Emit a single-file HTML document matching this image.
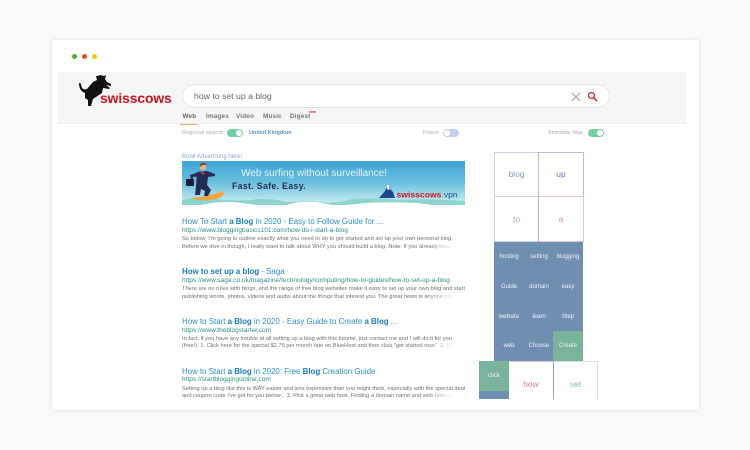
<!DOCTYPE html>
<html>
<head>
<meta charset="utf-8">
<style>
html,body{margin:0;padding:0;width:750px;height:450px;overflow:hidden;background:#f9f9f9;font-family:"Liberation Sans",sans-serif}
#w{position:absolute;left:0;top:0;width:750px;height:450px;filter:blur(.25px)}
.a{position:absolute;white-space:nowrap}
#card{position:absolute;left:52px;top:40px;width:647px;height:370px;background:#fff;border-radius:3px;box-shadow:0 0 4px rgba(0,0,0,.12)}
.dot{position:absolute;top:53.5px;width:5.4px;height:5.4px;border-radius:50%}
.tab{position:absolute;top:112.5px;font-size:6.3px;font-weight:bold;color:#777;letter-spacing:.2px;white-space:nowrap}
.lbl{position:absolute;font-size:5.3px;color:#aaa;letter-spacing:.2px;white-space:nowrap}
.tg{position:absolute;top:129px;width:16px;height:8px;border-radius:4px}
.tg i{position:absolute;top:1px;width:6px;height:6px;border-radius:50%;background:#fff}
.t{position:absolute;left:182px;font-size:7.9px;color:#2d8fc4;white-space:nowrap;line-height:10px}
.t b{color:#1a7cb5}
.u{position:absolute;left:182px;font-size:6.55px;color:#2b8f83;white-space:nowrap;line-height:8px}
.s{position:absolute;left:182px;width:283px;font-size:5.7px;color:#707070;white-space:nowrap;line-height:7px;overflow:hidden}
.fade{position:absolute;left:428px;width:38px;height:8px;background:linear-gradient(90deg,rgba(255,255,255,0),#fff 70%)}
.c{position:absolute;width:30px;height:30px;line-height:30px;text-align:center;font-size:6px;color:#eef2f7;background:#6e8fb2}
.b{position:absolute;box-sizing:border-box;text-align:center;background:#fff;font-size:8.5px}
</style>
</head>
<body>
<div id="w">
<div id="card"></div>
<div class="dot" style="left:72px;background:#4cae3f"></div>
<div class="dot" style="left:82px;background:#dd4f35"></div>
<div class="dot" style="left:92px;background:#eec116"></div>

<div class="a" style="left:58px;top:72px;width:628px;height:52px;background:#f5f5f5;border-bottom:1px solid #ececec;box-sizing:border-box"></div>

<svg class="a" style="left:78px;top:74px" width="36" height="34" viewBox="0 0 36 34">
<path fill="#111" d="M1 9 L2.5 9 L4 14 Q6 16 9 15 L15 8 L19 6 L18 2 L20 2 L22 1 L26 2 L28 1 L27 5 L29 8 L33 10 L33 12 L28 11 L32 14 L31 15 L25 14 L24 19 L18 23 L15 25 L13 32 L10 32 L10 26 L7 24 L7 19 Q1 17 1 9 Z"/>
</svg>
<div class="a" style="left:100px;top:89.5px;font-size:13.9px;font-weight:bold;color:#c8141f;line-height:16px;letter-spacing:-.1px">swisscows</div>

<div class="a" style="left:182px;top:84px;width:428px;height:24px;box-sizing:border-box;background:#fff;border:1px solid #e2e2e2;border-radius:12px"></div>
<div class="a" style="left:194px;top:90px;font-size:8.7px;color:#666;line-height:12px">how to set up a blog</div>
<svg class="a" style="left:571px;top:92px" width="10" height="10" viewBox="0 0 10 10"><path d="M1 1 L9 9 M9 1 L1 9" stroke="#a0a0a0" stroke-width="1.1" fill="none"/></svg>
<svg class="a" style="left:587px;top:91px" width="11" height="11" viewBox="0 0 11 11"><circle cx="4.5" cy="4.5" r="3" stroke="#d0202a" stroke-width="1.3" fill="none"/><path d="M6.8 6.8 L10 10" stroke="#d0202a" stroke-width="1.5"/></svg>

<div class="tab" style="left:182.5px;color:#666">Web</div>
<div class="tab" style="left:206px">Images</div>
<div class="tab" style="left:236px">Video</div>
<div class="tab" style="left:263px">Music</div>
<div class="tab" style="left:290px">Digest</div>
<div class="a" style="left:309px;top:109.5px;font-size:3.5px;color:#d0202a;font-weight:bold">new</div>
<div class="a" style="left:180px;top:124px;width:17px;height:1px;background:#f0a868"></div>

<div class="lbl" style="left:182px;top:130px">Regional search</div>
<div class="tg" style="left:227px;background:#73d0a4"><i style="right:1px"></i></div>
<div class="lbl" style="left:249px;top:130px;color:#5b93c7;font-size:5.5px;font-weight:bold;letter-spacing:0">United Kingdom</div>
<div class="lbl" style="left:423px;top:130px">Filters</div>
<div class="tg" style="left:443px;background:#c2d0ef"><i style="left:1px"></i></div>
<div class="lbl" style="left:548px;top:130px;letter-spacing:.1px">Semantic Map</div>
<div class="tg" style="left:588px;background:#73d0a4"><i style="right:1px"></i></div>

<div class="a" style="left:182px;top:153px;font-size:6px;color:#8aa9cc;line-height:8px">Book Advertising here!</div>

<svg class="a" style="left:182px;top:160.5px" width="283" height="44" viewBox="0 0 283 44">
<defs><linearGradient id="g" x1="0" y1="0" x2="0" y2="1"><stop offset="0" stop-color="#3ea3d4"/><stop offset=".5" stop-color="#6cc0e0"/><stop offset="1" stop-color="#d3f0f6"/></linearGradient></defs>
<rect width="283" height="44" fill="url(#g)"/>
<path d="M0 44 L0 39 Q15 35 35 38 Q60 41 75 38 Q90 37 105 41 L130 40 Q150 44 170 38 Q190 36 215 39 Q245 37 283 40 L283 44 Z" fill="#8cd5cd"/>
<path d="M20 44 Q40 39 60 42 L75 44 Z M105 44 Q115 40 135 41 L150 44 Z M165 44 Q195 40 235 42 L250 44 Z" fill="#fff"/>
<path d="M8 37 Q26 36 41 30 Q44 35 34 38 Q20 41 8 37 Z" fill="#f4a340"/>
<path d="M15 11 L25 10 L33 13 L33 15 L26 16 L25 24 L29 29 L26 35 L22 35 L23 30 L19 28 L18 34 L13 34 L14 25 Z" fill="#232c55"/>
<path d="M17 11 L8 14 L9 19 L11 19 L11 16 L19 15 Z" fill="#232c55"/>
<rect x="4" y="18" width="8" height="7" rx="1" fill="#1c2030"/>
<circle cx="21" cy="6" r="3.4" fill="#e8b48f"/>
<path d="M18 5 L19 2 L24 2 L24 4 L20 4 L19 6 Z" fill="#8a4a22"/>
<path d="M18 11 L23 12 L21 14 Z" fill="#d93a3a"/>
<text x="59" y="15" font-family="Liberation Sans" font-size="10" fill="#e5f4fa">Web surfing without surveillance!</text>
<text x="50" y="28" font-family="Liberation Sans" font-size="8.8" font-weight="bold" fill="#1e2d4f" letter-spacing=".3">Fast. Safe. Easy.</text>
<path d="M197 37 L203 30 L206 23 L209 29 L211 31 L213 37 Z" fill="#1c4a8e"/>
<path d="M204.5 27 L206 23 L208 28 L206 29 Z" fill="#fff"/>
<text x="214.5" y="36.5" font-family="Liberation Sans" font-size="8.6" font-weight="bold" fill="#c8141f">swisscows<tspan fill="#1c4a8e" font-weight="normal">.vpn</tspan></text>
</svg>

<div class="t" style="top:217px">How To Start <b>a Blog</b> in 2020 - Easy to Follow Guide for ...</div>
<div class="u" style="top:226.7px">https://www.bloggingbasics101.com/how-do-i-start-a-blog</div>
<div class="s" style="top:236px">So below, I'm going to outline exactly what you need to do to get started and set up your own personal blog.</div>
<div class="s" style="top:243.5px">Before we dive in though, I really want to talk about WHY you should build a blog. Note: If you already have a</div>
<div class="fade" style="top:243px"></div>

<div class="t" style="top:267px"><b>How to set up a blog</b> - Saga</div>
<div class="u" style="top:276.7px">https://www.saga.co.uk/magazine/technology/computing/how-to-guides/how-to-set-up-a-blog</div>
<div class="s" style="top:286px">There are no rules with blogs, and the range of free blog websites make it easy to set up your own blog and start</div>
<div class="s" style="top:293.5px">publishing words, photos, videos and audio about the things that interest you. The great news is anyone can</div>
<div class="fade" style="top:293px"></div>

<div class="t" style="top:316.7px">How to Start <b>a Blog</b> in 2020 - Easy Guide to Create <b>a Blog</b> ...</div>
<div class="u" style="top:326.7px">https://www.theblogstarter.com</div>
<div class="s" style="top:335.5px">In fact, if you have any trouble at all setting up a blog with this tutorial, just contact me and I will do it for you</div>
<div class="s" style="top:343.2px">(free!). 1. Click here for the special $2.75 per month rate on BlueHost and then click "get started now". 2. Select</div>
<div class="fade" style="top:343px"></div>

<div class="t" style="top:366.7px">How to Start <b>a Blog</b> in 2020: Free <b>Blog</b> Creation Guide</div>
<div class="u" style="top:376.3px">https://startbloggingonline.com</div>
<div class="s" style="top:385.5px">Setting up a blog like this is WAY easier and less expensive than you might think, especially with the special deal</div>
<div class="s" style="top:393.2px">and coupon code I've got for you below... 3. Pick a great web host. Finding a domain name and web host is</div>
<div class="fade" style="top:393px"></div>

<div class="b" style="left:494px;top:152px;width:45px;height:45px;line-height:43px;border:1px solid #c6d2df;color:#7f9cc0">blog</div>
<div class="b" style="left:538px;top:152px;width:46px;height:45px;line-height:43px;border:1px solid #b4bedb;color:#6f78b8">up</div>
<div class="b" style="left:494px;top:196px;width:45px;height:46px;line-height:45px;border:1px solid #c6d2df;border-top-width:1.5px;color:#9bb2cb">to</div>
<div class="b" style="left:538px;top:196px;width:46px;height:46px;line-height:45px;border:1px solid #e6c4d6;border-left-color:#c3aac6;color:#d68aaa">a</div>

<div class="a" style="left:494px;top:242px;width:89px;height:119px;background:#6e8fb2"></div>
<div class="c" style="left:494px;top:242px">hosting</div>
<div class="c" style="left:524px;top:242px">setting</div>
<div class="c" style="left:553px;top:242px">blogging</div>
<div class="c" style="left:494px;top:272px;background:#6d8eb1">Guide</div>
<div class="c" style="left:524px;top:272px;background:#6c8db0">domain</div>
<div class="c" style="left:553px;top:272px">easy</div>
<div class="c" style="left:494px;top:302px">website</div>
<div class="c" style="left:524px;top:302px">learn</div>
<div class="c" style="left:553px;top:302px">Step</div>
<div class="c" style="left:494px;top:331px">web</div>
<div class="c" style="left:524px;top:331px">Choose</div>
<div class="c" style="left:553px;top:331px;background:#7bb39a">Create</div>

<div class="c" style="left:479px;top:361px;background:#7bb39a">click</div>
<div class="a" style="left:479px;top:391px;width:30px;height:8px;background:#6e8fb2"></div>
<div class="b" style="left:509px;top:361px;width:45px;height:38px;line-height:44px;border-top:1px solid #e6bcd0;border-right:1px solid #a899a8;color:#d07a9e">how</div>
<div class="b" style="left:554px;top:361px;width:44px;height:38px;line-height:44px;border-top:1px solid #cfe5dc;border-right:1px solid #cfe5dc;color:#86c2a6">set</div>
</div>
</body>
</html>
